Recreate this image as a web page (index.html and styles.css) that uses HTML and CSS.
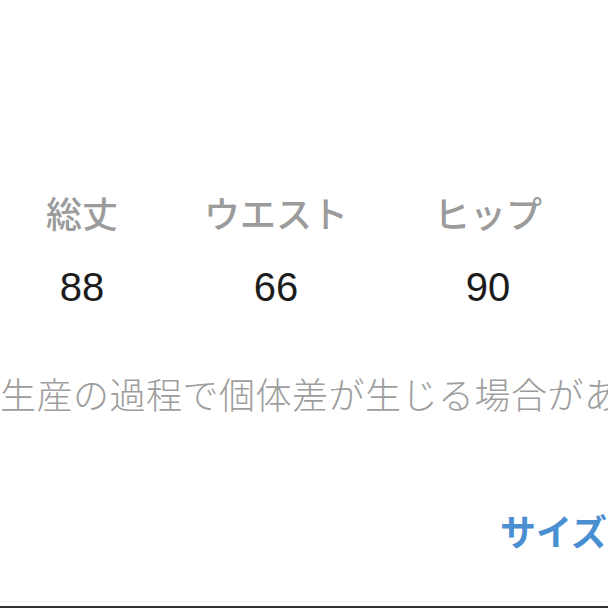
FILE: index.html
```html
<!DOCTYPE html>
<html lang="ja">
<head>
<meta charset="utf-8">
<link rel="stylesheet" href="styles.css">
</head>
<body>
<div class="page">
  <div class="size-table">
    <div class="col">
      <div class="label">総丈</div>
      <div class="value">88</div>
    </div>
    <div class="col">
      <div class="label">ウエスト</div>
      <div class="value">66</div>
    </div>
    <div class="col">
      <div class="label">ヒップ</div>
      <div class="value">90</div>
    </div>
  </div>
  <p class="note">生産の過程で個体差が生じる場合があります。</p>
  <div class="link-row"><span class="link">サイズガイド</span></div>
  <div class="bottom-space"></div>
  <div class="bottom-rule"></div>
</div>
</body>
</html>
```
FILE: styles.css
```css
html, body {
  margin: 0;
  padding: 0;
  background: #ffffff;
}
.page {
  width: 608px;
  height: 608px;
  overflow: hidden;
  display: flex;
  flex-direction: column;
  font-family: "Noto Sans CJK JP", "Noto Sans", sans-serif;
}
.size-table {
  display: flex;
  gap: 86px;
  padding-left: 46px;
  margin-top: 190px;
}
.col {
  display: flex;
  flex-direction: column;
  align-items: center;
}
.label {
  font-size: 36px;
  line-height: 44px;
  font-weight: 500;
  color: #9b9b9b;
  white-space: nowrap;
}
.value {
  margin-top: 29px;
  font-family: "Liberation Sans", Arial, sans-serif;
  font-size: 40px;
  line-height: 48px;
  color: #1c1c1c;
}
.note {
  margin: 60px 0 0 0;
  font-size: 36px;
  line-height: 44px;
  color: #9d9d9d;
  font-weight: 300;
  white-space: nowrap;
  letter-spacing: 0.5px;
}
.link-row {
  margin-top: 93px;
  padding-left: 500px;
  white-space: nowrap;
}
.link {
  font-size: 36px;
  line-height: 44px;
  font-weight: 700;
  color: #4a8fd1;
}
.bottom-space {
  flex: 1;
  border-bottom: 1px solid #f0f0f0;
  margin-bottom: 4px;
}
.bottom-rule {
  height: 2px;
  background: #333333;
}
```
